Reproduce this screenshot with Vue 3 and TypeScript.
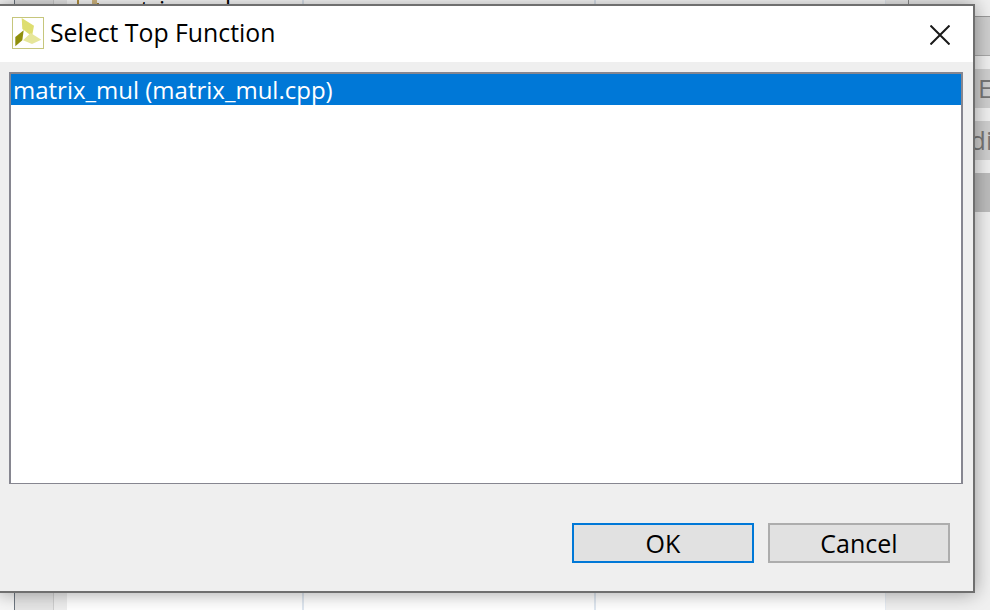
<template>
  <div class="desktop">
    <!-- window behind the dialog -->
    <div class="backdrop">
      <div class="col gutter"></div>
      <div class="col rail"></div>
      <div class="col rail2"></div>
      <div class="col page first">
        <svg class="folder" width="22" height="6" viewBox="0 0 22 6">
          <rect x="0" y="0" width="2" height="6" fill="#b8923e" />
          <rect x="15" y="0" width="5" height="4" fill="#d8bd84" />
          <rect x="20" y="3" width="2" height="3" fill="#a9852f" />
        </svg>
        <span class="behind-text">matrix_mul</span>
      </div>
      <div class="col page"></div>
      <div class="col page last"></div>
      <div class="side">
        <div class="side-head"></div>
        <div v-for="(row, i) in sideRows" :key="i" class="side-row" :class="row.cls">
          <span>{{ row.text }}</span>
        </div>
      </div>
    </div>

    <div class="dialog">
      <header class="title-bar">
        <svg class="logo" width="32" height="32" viewBox="0 0 32 32">
          <rect x="0.5" y="0.5" width="31" height="31" fill="#fff" stroke="#c6c67c" />
          <polygon points="9.7,1 22,8.7 20,19.3 10.3,12" fill="#dede70" />
          <polygon points="3.3,29.3 3.3,20 11.7,13.3 10.3,23.3" fill="#8f8f0c" />
          <polygon points="11,23.3 18.7,16 29.3,22.7 20,27" fill="#e6e69a" />
        </svg>
        <span class="title">Select Top Function</span>
        <svg class="close" width="20" height="20" viewBox="0 0 20 20">
          <path d="M0.5 0.5 L19.5 19.5 M19.5 0.5 L0.5 19.5" stroke="#1a1a1a" stroke-width="2" fill="none" />
        </svg>
      </header>

      <div class="body">
        <ul class="list">
          <li v-for="fn in functions" :key="fn" class="item" :class="{ selected: fn === selected }">{{ fn }}</li>
        </ul>
        <div class="actions">
          <button class="btn primary">OK</button>
          <button class="btn">Cancel</button>
        </div>
      </div>
    </div>
  </div>
</template>

<script setup lang="ts">
import { ref } from "vue";

const functions = ref<string[]>(["matrix_mul (matrix_mul.cpp)"]);
const selected = ref("matrix_mul (matrix_mul.cpp)");

const sideRows = [
  { text: "", cls: "lined" },
  { text: "E", cls: "" },
  { text: "di", cls: "shift" },
  { text: "", cls: "dark" },
];
</script>

<style>
html,
body {
  margin: 0;
  overflow: hidden;
}
</style>

<style scoped>
.desktop {
  position: relative;
  width: 990px;
  height: 610px;
  overflow: hidden;
  font-family: "Open Sans", "Noto Sans", sans-serif;
  color: #000;
}

.backdrop {
  display: flex;
  height: 100%;
  background: #fff;
}

.col {
  box-sizing: border-box;
  height: 100%;
  flex: none;
}

.gutter {
  width: 15px;
  background: #f6f6f6;
  border-right: 1px solid #6d7680;
}

.rail {
  width: 39px;
  background: #e6e6e6;
  border-right: 1px solid #cfcfcf;
}

.rail2 {
  width: 13px;
  background: #eeeeee;
}

.page {
  width: 292px;
  background: #fff;
  border-right: 2px solid #dfe7f0;
  position: relative;
  overflow: hidden;
}

.first {
  width: 237px;
}

.last {
  width: 290px;
  border-right: 1px solid #e6ecf3;
}

.folder {
  position: absolute;
  left: 10px;
  top: 0;
}

.behind-text {
  position: absolute;
  left: 38px;
  top: -3px;
  font-size: 24px;
  line-height: 1;
  color: #000;
}

.side {
  flex: 1;
  background: #f0f0f0;
  display: flex;
  flex-direction: column;
}

.side-head {
  box-sizing: border-box;
  height: 17px;
  margin-left: 22px;
  border-left: 1px solid #8c8c8c;
  border-bottom: 1px solid #9a9a9a;
}

.side-row {
  box-sizing: border-box;
  height: 39px;
  margin-bottom: 13px;
  padding-left: 92px;
  background: #cfcfcf;
  color: #777;
  font-size: 26px;
  line-height: 39px;
  white-space: nowrap;
}

.lined {
  border-bottom: 1px solid #a8a8a8;
}

.shift {
  padding-left: 84px;
}

.dark {
  background: #bdbdbd;
}

.dialog {
  position: absolute;
  left: -2px;
  top: 4px;
  box-sizing: border-box;
  width: 977px;
  height: 589px;
  border: 2px solid #6f6f6f;
  background: #efefef;
  box-shadow: 0 0 18px rgba(0, 0, 0, 0.38);
  display: flex;
  flex-direction: column;
}

.title-bar {
  height: 56px;
  flex: none;
  background: #fff;
  display: flex;
  align-items: center;
  padding: 0 23px 0 12px;
}

.logo {
  flex: none;
  margin-top: -2px;
}

.title {
  margin-left: 6px;
  margin-top: -5px;
  font-size: 24.8px;
  flex: 1;
}

.close {
  flex: none;
  margin-top: 2px;
}

.body {
  flex: 1;
  display: flex;
  flex-direction: column;
  padding: 10px 23px 28px 9px;
}

.list {
  box-sizing: border-box;
  width: 954px;
  height: 412px;
  margin: 0;
  list-style: none;
  padding: 0;
  border: 2px solid #868690;
  border-bottom-width: 1px;
  background: #fff;
}

.item {
  height: 31px;
  line-height: 31px;
  padding-left: 2px;
  font-size: 24px;
  white-space: nowrap;
}

.selected {
  background: #0078d7;
  color: #fff;
}

.actions {
  margin-top: auto;
  display: flex;
  justify-content: flex-end;
  gap: 14px;
}

.btn {
  box-sizing: border-box;
  width: 182px;
  height: 40px;
  padding: 0;
  border: 2px solid #adadad;
  background: #e1e1e1;
  font: inherit;
  font-size: 25px;
  line-height: 36px;
  color: #000;
}

.primary {
  border-color: #0078d7;
}
</style>
